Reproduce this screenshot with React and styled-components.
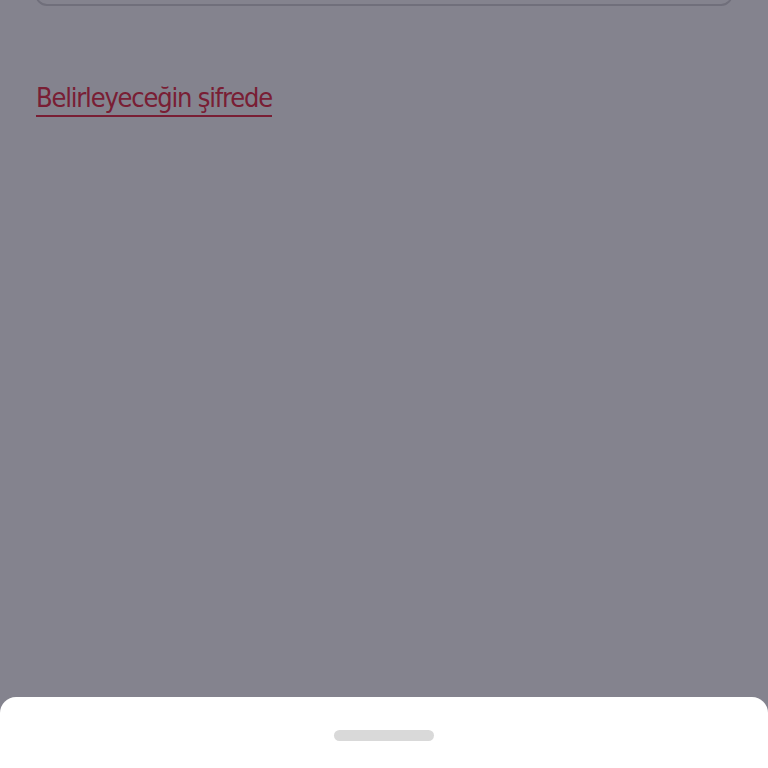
import React from "react";
import styled, { createGlobalStyle } from "styled-components";

const Global = createGlobalStyle`
  html, body { margin: 0; padding: 0; background: #ffffff; }
  body { font-family: "Noto Sans", "Open Sans", sans-serif; }
  #root { min-height: 768px; }
`;

const Page = styled.div`
  width: 768px;
  height: 768px;
  background: #ffffff;
  box-sizing: border-box;
  padding: 0 35px;
  display: flex;
  flex-direction: column;
  overflow: hidden;
`;

const InputBox = styled.div`
  margin-top: -60px;
  height: 62px;
  border: 2px solid #d6d6d8;
  border-radius: 12px;
  background: #ffffff;
  flex-shrink: 0;
`;

const LinkText = styled.a`
  margin-top: 75px;
  align-self: flex-start;
  font-family: "DejaVu Sans Condensed", "Noto Sans", sans-serif;
  font-size: 27px;
  line-height: 34px;
  color: #e8344a;
  text-decoration: none;
  border-bottom: 2px solid #e8344a;
  margin-left: 1px;
  letter-spacing: -1.2px;
`;

const Overlay = styled.div`
  position: fixed;
  inset: 0;
  background: rgba(10, 8, 30, 0.5);
  display: flex;
  flex-direction: column;
  justify-content: flex-end;
`;

const Sheet = styled.div`
  height: 71px;
  background: #ffffff;
  border-radius: 16px 16px 0 0;
  display: flex;
  justify-content: center;
  padding-top: 33px;
  box-sizing: border-box;
`;

const Handle = styled.div`
  width: 100px;
  height: 11px;
  border-radius: 6px;
  background: #d9d9d9;
`;

export default function App() {
  return (
    <>
      <Global />
      <Page>
        <InputBox />
        <LinkText href="#">Belirleyeceğin şifrede</LinkText>
      </Page>
      <Overlay>
        <Sheet>
          <Handle />
        </Sheet>
      </Overlay>
    </>
  );
}
